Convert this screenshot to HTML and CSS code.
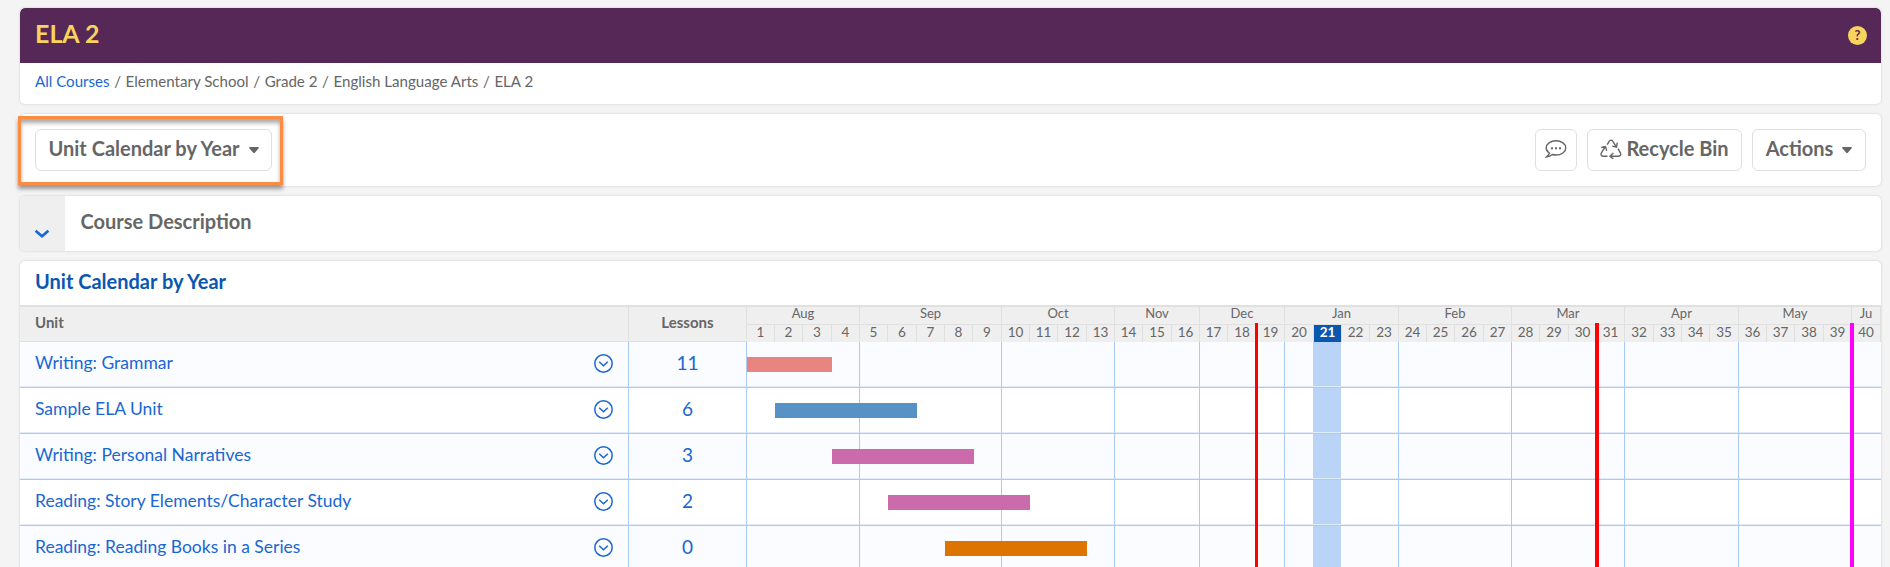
FILE: index.html
```
<!DOCTYPE html>
<html lang="en">
<head>
<meta charset="utf-8">
<title>ELA 2</title>
<link rel="stylesheet" href="styles.css">
</head>
<body>
<svg class="defs" width="0" height="0">
  <symbol id="menu" viewBox="0.5 0.5 19 19"><circle cx="10" cy="10" r="8.7"/><path d="M5.7 8.2 10 12.3l4.3-4.1"/></symbol>
  <symbol id="caret" viewBox="0 0 10 6"><path d="M.8 0h8.400q1.200.5.300 1.600L6 5.400q-1 1-2 0L.5 1.600Q-.4.5.8 0Z"/></symbol>
</svg>
<main class="page">
  <header class="card course">
    <div class="banner"><h1 class="banner-title">ELA 2</h1><span class="help">?</span></div>
    <nav class="crumbs"><a class="crumb-link">All Courses</a><i>/</i><span>Elementary School</span><i>/</i><span>Grade 2</span><i>/</i><span>English Language Arts</span><i>/</i><span>ELA 2</span></nav>
  </header>

  <section class="card toolbar">
    <button class="btn view">Unit Calendar by Year<svg class="caret"><use href="#caret"/></svg></button>
    <div class="tools">
      <button class="btn comment"><svg width="22" height="20" viewBox="0 0 22 20"><path d="M4.5 14.2C2.500 12.800 1.200 11 1.200 8.900 1.200 4.900 5.500 1.800 11 1.800s9.800 3.100 9.800 7.100-4.300 7.100-9.800 7.100c-1.300 0-2.500-.2-3.600-.5C5.800 16.900 3.800 17.800 1.300 18c1.700-1.500 2.600-2.600 3.200-3.800Z"/><path class="dots" d="M6 8.300h2v2H6zM10 8.300h2v2h-2zM14 8.300h2v2h-2z"/></svg></button>
      <button class="btn recycle"><svg width="22" height="20" viewBox="0 0 22 20"><path d="M7.200 5.600 9.200 2.300Q11 0 12.800 2.300l3.500 5.500M17.300 3.700l-.8 4.400-4.200-1M18 9.600l2.400 4.200q1.200 3-2 3.500H10.500M13.400 14l-3.500 3.300 3.500 2.600M7.500 17.300H3.300q-3.300-.6-1.800-3.600L5.200 7.800M1.200 8.500l4.200-1 1.300 4.200"/></svg>Recycle Bin</button>
      <button class="btn actions">Actions<svg class="caret"><use href="#caret"/></svg></button>
    </div>
    <div class="callout"></div>
  </section>

  <section class="card description">
    <div class="toggle"><svg width="16" height="10" viewBox="0 0 16 10"><path d="m1.600 1.700 6.400 5.600 6.400-5.600"/></svg></div>
    <h2 class="description-title">Course Description</h2>
  </section>

  <section class="card calendar">
    <h2 class="calendar-title">Unit Calendar by Year</h2>
    <div class="head">
      <div class="th unit">Unit</div>
      <div class="th lessons">Lessons</div>
      <div class="weeks scale">
        <b class="w4">Aug</b><b class="w5">Sep</b><b class="w4">Oct</b><b class="w3">Nov</b><b class="w3">Dec</b><b class="w4">Jan</b><b class="w4">Feb</b><b class="w4">Mar</b><b class="w4">Apr</b><b class="w4">May</b><b>Ju</b>
        <span>1</span><span>2</span><span>3</span><span>4</span><span>5</span><span>6</span><span>7</span><span>8</span><span>9</span><span>10</span>
        <span>11</span><span>12</span><span>13</span><span>14</span><span>15</span><span>16</span><span>17</span><span>18</span><span>19</span><span>20</span>
        <span class="now">21</span><span>22</span><span>23</span><span>24</span><span>25</span><span>26</span><span>27</span><span>28</span><span>29</span><span>30</span>
        <span>31</span><span>32</span><span>33</span><span>34</span><span>35</span><span>36</span><span>37</span><span>38</span><span>39</span><span>40</span>
      </div>
    </div>
    <div class="row">
      <div class="unit"><a>Writing: Grammar</a><svg class="menu"><use href="#menu"/></svg></div>
      <div class="lessons">11</div>
      <div class="weeks"><b class="m1"></b><b class="m2"></b><b class="m3"></b><b class="m4"></b><b class="m5"></b><b class="m6"></b><b class="m7"></b><b class="m8"></b><b class="m9"></b><b class="m10"></b><i class="today"></i><i class="bar coral"></i></div>
    </div>
    <div class="row">
      <div class="unit"><a>Sample ELA Unit</a><svg class="menu"><use href="#menu"/></svg></div>
      <div class="lessons">6</div>
      <div class="weeks"><b class="m1"></b><b class="m2"></b><b class="m3"></b><b class="m4"></b><b class="m5"></b><b class="m6"></b><b class="m7"></b><b class="m8"></b><b class="m9"></b><b class="m10"></b><i class="today"></i><i class="bar blue"></i></div>
    </div>
    <div class="row">
      <div class="unit"><a>Writing: Personal Narratives</a><svg class="menu"><use href="#menu"/></svg></div>
      <div class="lessons">3</div>
      <div class="weeks"><b class="m1"></b><b class="m2"></b><b class="m3"></b><b class="m4"></b><b class="m5"></b><b class="m6"></b><b class="m7"></b><b class="m8"></b><b class="m9"></b><b class="m10"></b><i class="today"></i><i class="bar pink narratives"></i></div>
    </div>
    <div class="row">
      <div class="unit"><a>Reading: Story Elements/Character Study</a><svg class="menu"><use href="#menu"/></svg></div>
      <div class="lessons">2</div>
      <div class="weeks"><b class="m1"></b><b class="m2"></b><b class="m3"></b><b class="m4"></b><b class="m5"></b><b class="m6"></b><b class="m7"></b><b class="m8"></b><b class="m9"></b><b class="m10"></b><i class="today"></i><i class="bar pink story"></i></div>
    </div>
    <div class="row">
      <div class="unit"><a>Reading: Reading Books in a Series</a><svg class="menu"><use href="#menu"/></svg></div>
      <div class="lessons">0</div>
      <div class="weeks"><b class="m1"></b><b class="m2"></b><b class="m3"></b><b class="m4"></b><b class="m5"></b><b class="m6"></b><b class="m7"></b><b class="m8"></b><b class="m9"></b><b class="m10"></b><i class="today"></i><i class="bar orange"></i></div>
    </div>
    <div class="marker semester"></div>
    <div class="marker quarter"></div>
    <div class="marker year-end"></div>
  </section>
</main>
</body>
</html>
```
FILE: styles.css
```
* { box-sizing: border-box; }
html, body { height: 100%; overflow: hidden; }
body { margin: 0; background: #f4f4f4; color: #666; font-family: Lato, "Open Sans", sans-serif; font-size: 17.500px; }
h1, h2 { margin: 0; }
i, b { font-style: normal; font-weight: 400; }
svg { fill: none; stroke: currentColor; display: block; }
.defs { position: absolute; }

.page { display: flex; flex-direction: column; gap: 10px; padding: 8px 9px 0 20px; }
.card { background: #fff; border-radius: 5px; box-shadow: 0 0 2px 1px #e2e2e2; flex: none; position: relative; }

.course { height: 96px; overflow: hidden; }
.banner { height: 55px; background: #552857; color: #f9d45c; display: flex; justify-content: space-between; align-items: center; padding: 0 14px 0 15px; border-radius: 5px 5px 0 0; }
.banner-title { font-size: 25px; line-height: 30px; font-weight: 700; padding-bottom: 5px; }
.help { width: 19px; height: 19px; border-radius: 50%; background: #f9d45c; color: #552857; font: 700 13px/19px Lato, sans-serif; text-align: center; }
.crumbs { display: flex; padding: 8px 15px; font-size: 15.100px; line-height: 20px; }
.crumbs i { padding: 0 4.600px; }
.crumb-link { color: #1967d2; }

.toolbar { height: 72px; display: flex; justify-content: space-between; align-items: flex-start; padding: 15px 15px 0; }
.tools { display: flex; gap: 10px; }
.btn { height: 42px; border: 1px solid #dfdfdf; border-radius: 6px; background: #fff; color: #666; font: 700 20px/24px Lato, sans-serif; padding: 0 0 4px; display: flex; align-items: center; justify-content: center; }
.view { width: 237px; }
.comment { width: 42px; }
.recycle { width: 155px; gap: 4px; }
.actions { width: 114px; }
.btn svg { stroke-width: 1.4; margin-top: 2px; }
.dots { fill: #666; stroke: none; }
.btn .caret { width: 10px; height: 6px; fill: #666; stroke: none; margin: 4px 0 0 9px; }
.callout { position: absolute; left: -2px; top: 2px; width: 265px; height: 69px; border: 3px solid #fb8c42; box-shadow: 0 4px 4px #999, inset 0 4px 4px #aaa; }

.description { height: 55px; display: flex; overflow: hidden; border-radius: 5px; }
.toggle { width: 45px; background: #efefef; color: #1967d2; padding: 33px 0 0 14px; }
.toggle svg { stroke-width: 2.700; }
.description-title { font-size: 20px; line-height: 24px; font-weight: 700; padding: 13px 15.500px; }

.calendar { height: 330px; overflow: hidden; }
.calendar-title { color: #0b57b0; font-size: 20px; line-height: 24px; font-weight: 700; padding: 8px 15px 12px; }
.head, .row { display: grid; grid-template-columns: 609px 118px 1134px; }
.head { height: 37px; border-top: 2px solid #e0e0e0; background: #efefef; }
.th { border-right: 1px solid #e0e0e0; border-bottom: 1px solid #e0e0e0; font-size: 15px; font-weight: 700; line-height: 31px; }
.head .unit { padding-left: 15px; }
.head .lessons { text-align: center; }
.weeks { display: grid; grid-template-columns: 28px 28px 29px 28px 28px 29px 28px 28px 29px 28px 28px 29px 28px 28px 29px 28px 28px 29px 28px 29px 28px 28px 29px 28px 28px 29px 28px 28px 29px 28px 28px 29px 28px 28px 29px 28px 28px 29px 28px 29px; }
.scale { grid-template-rows: 18px 17px; text-align: center; font-size: 13.500px; }
.scale b { border-right: 1px solid #e0e0e0; border-bottom: 1px solid #e0e0e0; font-size: 13px; line-height: 13px; }
.scale span { border-right: 1px solid #e0e0e0; line-height: 14px; }
.scale .now { background: #0b57b0; color: #fff; font-weight: 700; }
.w3 { grid-column: span 3; }
.w4 { grid-column: span 4; }
.w5 { grid-column: span 5; }

.row { height: 46px; background: #fff; border-bottom: 1px solid #aacbf9; box-shadow: inset 0 -1px #e0ecfc; color: #1967d2; }
.row:nth-child(odd) { background: #fff; }
.row:nth-child(odd), .row:nth-of-type(4n + 2) { background: #fff; }
.row:nth-child(odd) { background: #fafcff; }
.row .unit { display: flex; justify-content: space-between; padding: 8px 15px 0; border-right: 1px solid #aacbf9; line-height: 25px; }
.menu { width: 19px; height: 19px; stroke-width: 1.500; margin-top: 4px; }
.row .lessons { text-align: center; border-right: 1px solid #aacbf9; padding-top: 8px; line-height: 25px; font-size: 19px; }
.row .weeks b { grid-row: 1; border-right: 1px solid #aacbf9; }
.m1 { grid-column: 1 / 5; }
.m2 { grid-column: 5 / 10; }
.m3 { grid-column: 10 / 14; }
.m4 { grid-column: 14 / 17; }
.m5 { grid-column: 17 / 20; }
.m6 { grid-column: 20 / 24; }
.m7 { grid-column: 24 / 28; }
.m8 { grid-column: 28 / 32; }
.m9 { grid-column: 32 / 36; }
.m10 { grid-column: 36 / 40; }
.today { grid-row: 1; grid-column: 21; width: 28px; margin: 0 0 1px -1px; background: #bad4f8; }
.bar { grid-row: 1; height: 15px; margin-top: 15px; }
.coral { grid-column: 1 / 4; background: #e98580; }
.blue { grid-column: 2 / 7; background: #5892c5; }
.pink { background: #cb6bab; }
.narratives { grid-column: 4 / 9; margin-right: -1px; }
.story { grid-column: 6 / 11; }
.orange { grid-column: 8 / 13; background: #dd7400; }

/* term boundary lines laid over the timeline */
.marker { position: absolute; top: 62px; bottom: 0; width: 4px; background: #f00; }
.semester { left: 1235px; width: 3px; }
.quarter { left: 1575px; }
.year-end { left: 1830px; background: #f0f; }
```
